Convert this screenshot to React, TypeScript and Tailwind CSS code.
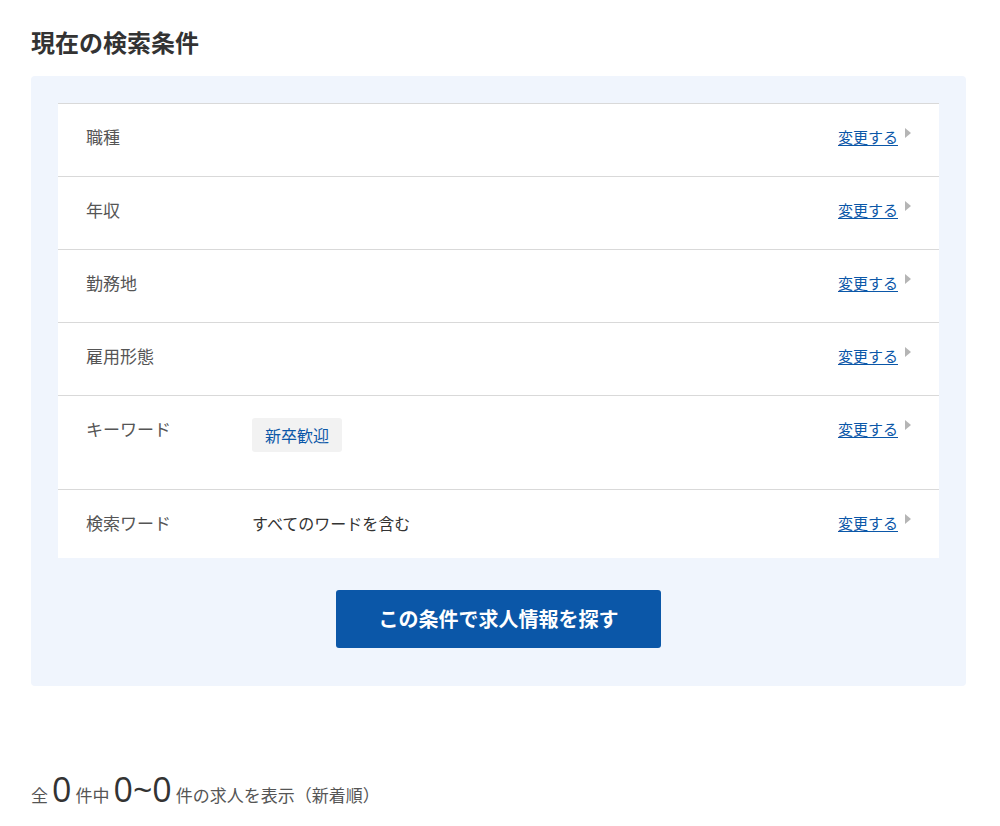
import React from 'react';

type Row = { label: string; value?: React.ReactNode; tall?: boolean };

const rows: Row[] = [
  { label: '職種' },
  { label: '年収' },
  { label: '勤務地' },
  { label: '雇用形態' },
  {
    label: 'キーワード',
    tall: true,
    value: (
      <span className="inline-block mt-px rounded-[3px] bg-[#f2f2f2] px-[13px] py-[5px] text-[16px] leading-6 text-[#0b57a8]">
        新卒歓迎
      </span>
    ),
  },
  { label: '検索ワード', value: <span className="text-[16px] leading-6 text-[#333]">すべてのワードを含む</span> },
];

const ChangeLink = () => (
  <div className="flex items-start gap-[7px] pt-[2px]">
    <a href="#" className="text-[15px] leading-5 text-[#0b57a8] underline underline-offset-2">
      変更する
    </a>
    <svg width="6" height="10" viewBox="0 0 6 10" className="mt-[1px]">
      <path d="M0 0 L6 5 L0 10 Z" fill="#b5b5b5" />
    </svg>
  </div>
);

export default function App() {
  return (
    <div
      className="min-h-[826px] bg-white pl-[31px] pr-[34px] pt-[26px] text-[#333]"
      style={{ fontFamily: '"Noto Sans CJK JP", "Noto Sans", sans-serif' }}
    >
      <h2 className="text-[24px] font-semibold leading-[32px] text-[#333]">現在の検索条件</h2>

      <div className="mt-[18px] rounded-[4px] bg-[#f0f5fd] px-[27px] pt-[27px] pb-[38px]">
        <div className="border-t border-[#d9d9d9] bg-white">
          {rows.map((row, i) => (
            <div
              key={row.label}
              className={`flex items-start pl-[28px] pr-[28px] pt-[21px] ${
                i < rows.length - 1 ? 'border-b border-[#d9d9d9]' : ''
              } ${row.tall ? 'pb-[37px]' : i === rows.length - 1 ? 'pb-[23px]' : 'pb-[27px]'}`}
            >
              <div className="w-[166px] shrink-0 text-[17px] leading-6 text-[#555]">{row.label}</div>
              <div className="flex-1">{row.value}</div>
              <ChangeLink />
            </div>
          ))}
        </div>

        <div className="mt-[32px] flex justify-center">
          <button className="h-[58px] w-[325px] rounded-[3px] bg-[#0b57a8] text-[20px] font-bold text-white">
            この条件で求人情報を探す
          </button>
        </div>
      </div>

      <div className="mt-[86px] flex items-baseline text-[17px] text-[#555]">
        <span>全</span>
        <span className="mx-[4px] text-[34px] leading-none text-[#333]" style={{ fontFamily: '"Open Sans", sans-serif' }}>0</span>
        <span>件中</span>
        <span className="mx-[4px] text-[34px] leading-none text-[#333]" style={{ fontFamily: '"Open Sans", sans-serif' }}>0~0</span>
        <span>件の求人を表示（新着順）</span>
      </div>
    </div>
  );
}
